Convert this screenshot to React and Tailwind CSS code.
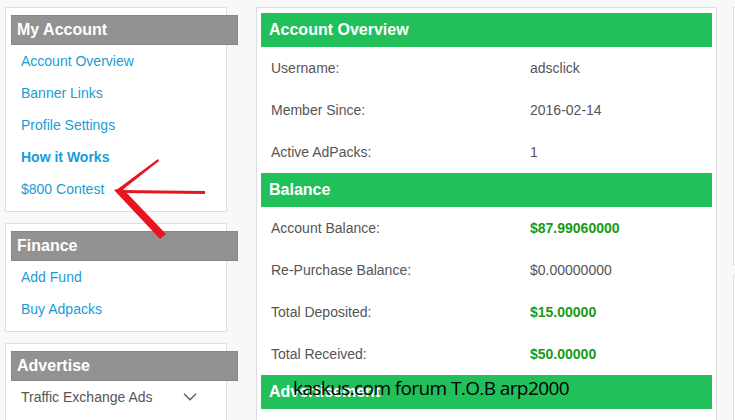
import React from "react";
import { ChevronDown } from "lucide-react";

const font = { fontFamily: '"Liberation Sans", Arial, sans-serif' };

function SideCard({ title, children }) {
  return (
    <div className="bg-white border border-[#dedede] pt-[7px] pb-[6px] pl-[5px]">
      <div className="w-[227px] h-[30px] bg-[#929292] border border-[#868686] text-white font-bold text-[16px] leading-[28px] pl-[5px]">
        {title}
      </div>
      {children}
    </div>
  );
}

function SideLink({ children, bold }) {
  return (
    <div className={`h-[32px] flex items-center pl-[10px] text-[14px] text-[#1a9bd7] ${bold ? "font-bold" : ""}`}>
      {children}
    </div>
  );
}

function GreenHeader({ children }) {
  return (
    <div className="h-[34px] bg-[#22c05b] text-white font-bold text-[16px] flex items-center pl-[8px]">
      {children}
    </div>
  );
}

function Row({ label, value, green }) {
  return (
    <div className="h-[42px] grid grid-cols-[269px_1fr] items-center text-[14px] text-[#555]">
      <div className="pl-[10px]">{label}</div>
      <div className={green ? "font-bold text-[#189b18]" : ""}>{value}</div>
    </div>
  );
}

export default function App() {
  return (
    <div
      className="relative w-[735px] h-[420px] overflow-hidden bg-[#f8f8f8] flex items-start pl-[5px] pt-[7px]"
      style={font}
    >
      <div className="w-[222px] shrink-0 flex flex-col gap-[11px]">
        <SideCard title="My Account">
          <SideLink>Account Overview</SideLink>
          <SideLink>Banner Links</SideLink>
          <SideLink>Profile Settings</SideLink>
          <SideLink bold>How it Works</SideLink>
          <SideLink>$800 Contest</SideLink>
        </SideCard>
        <SideCard title="Finance">
          <SideLink>Add Fund</SideLink>
          <SideLink>Buy Adpacks</SideLink>
        </SideCard>
        <SideCard title="Advertise">
          <div className="h-[32px] flex items-center justify-between pl-[10px] pr-[25px] text-[14px] text-[#555]">
            <span>Traffic Exchange Ads</span>
            <ChevronDown size={22} strokeWidth={1.8} color="#666" />
          </div>
          <div className="h-[40px]" />
        </SideCard>
      </div>

      <div className="ml-[29px] w-[461px] shrink-0 bg-white border border-[#dedede] pt-[5px] px-[4px] pb-[20px]">
        <GreenHeader>Account Overview</GreenHeader>
        <Row label="Username:" value="adsclick" />
        <Row label="Member Since:" value="2016-02-14" />
        <Row label="Active AdPacks:" value="1" />
        <GreenHeader>Balance</GreenHeader>
        <Row label="Account Balance:" value="$87.99060000" green />
        <Row label="Re-Purchase Balance:" value="$0.00000000" />
        <Row label="Total Deposited:" value="$15.00000" green />
        <Row label="Total Received:" value="$50.00000" green />
        <GreenHeader>Advertisement</GreenHeader>
      </div>

      <div className="ml-[16px] w-[200px] shrink-0 flex flex-col gap-[10px]">
        <div className="h-[258px] bg-white border border-[#dedede]" />
        <div className="h-[200px] bg-white border border-[#dedede]" />
      </div>

      <svg
        className="absolute left-0 top-0 pointer-events-none"
        width="735"
        height="420"
        viewBox="0 0 735 420"
      >
        <path d="M118 190 L205 191 L205 194 L120 193 Z" fill="#e8141e" />
        <path d="M115 191 L158 159 L159 161 L121 191 Z" fill="#e8141e" />
        <path d="M114 190 L122 188 L166 234 L160 239 Z" fill="#e8141e" />
      </svg>

      <div
        className="absolute left-[293px] top-[379px] text-[19px] text-black leading-none tracking-[-0.6px]"
        style={{ fontFamily: '"Open Sans", sans-serif' }}
      >
        kaskus.com forum T.O.B arp2000
      </div>
    </div>
  );
}
